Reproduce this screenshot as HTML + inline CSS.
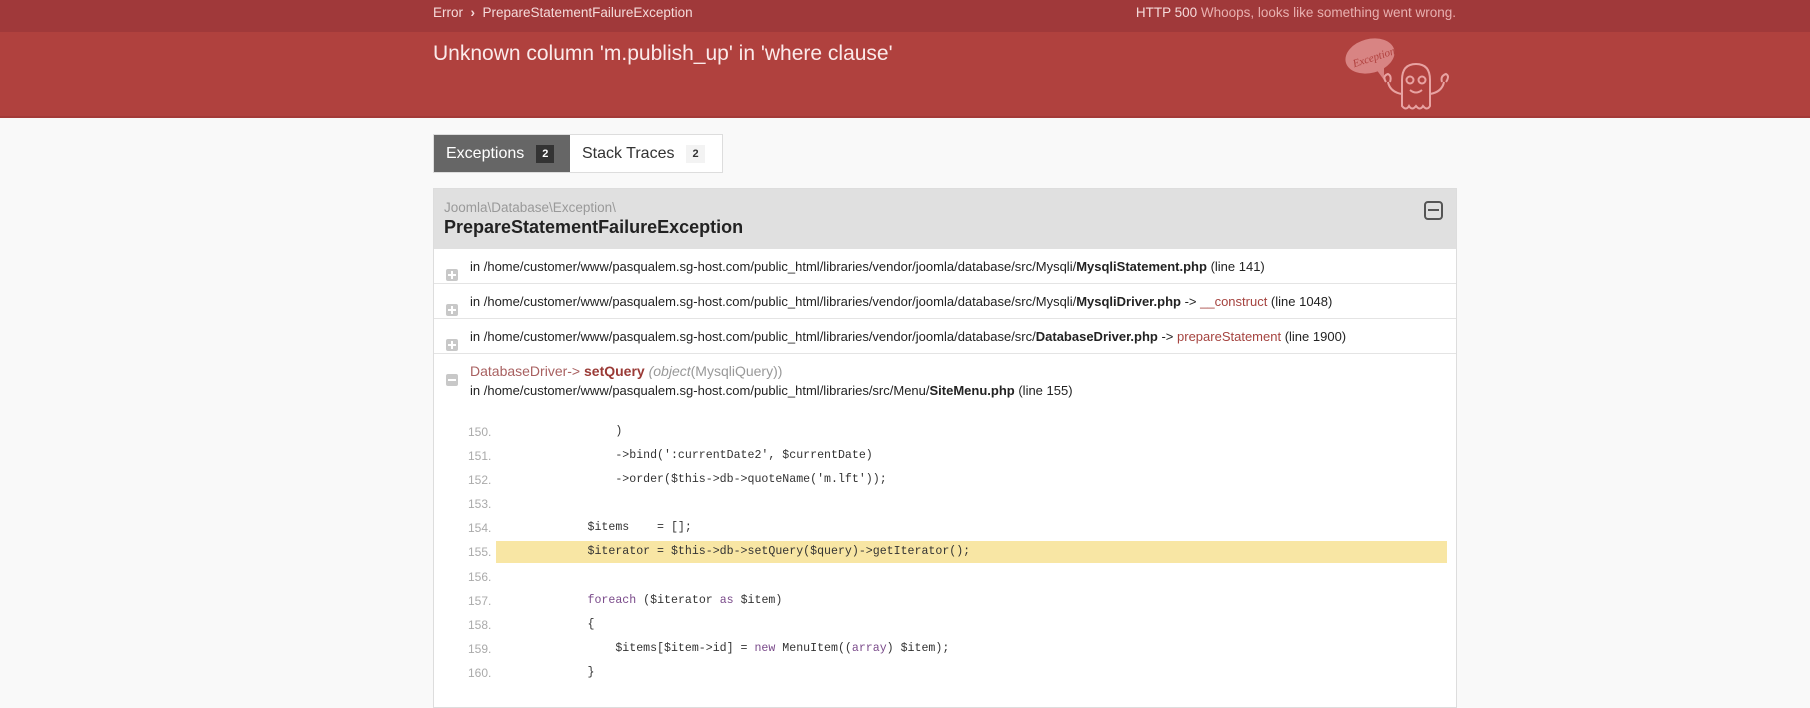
<!DOCTYPE html>
<html><head><meta charset="utf-8"><style>
*{margin:0;padding:0;box-sizing:border-box}
body{width:1810px;height:702px;overflow:hidden;background:#f9f9f9;font-family:"Liberation Sans",Arial,sans-serif;color:#333}
.top{height:32px;background:#a0393a;color:#f0c8c8;font-size:13.5px;position:relative}
.top .l{position:absolute;left:433px;top:5px;color:#f5dada}
.top .r{position:absolute;right:354px;top:5px;color:#e8b0b0}
.top .r b{font-weight:normal;color:#f5dada}
.hdr{height:86px;background:#b0413e;position:relative;border-bottom:2px solid #a33a38}
.hdr h1{position:absolute;left:433px;top:10px;font-weight:normal;font-size:21px;color:#fbeaea}
.ghost{position:absolute;left:1340px;top:4px}
.tabs{position:absolute;left:433px;top:134px;height:39px;display:flex;border:1px solid #ddd;background:#fff}
.tab{font-size:16px;padding:0 12px;display:flex;align-items:center}
.tab.a{background:#666;color:#fff;width:136px}
.tab span{font-size:11px;font-weight:bold;padding:3px 6px;margin-left:12px}
.tab.a span{background:#333;color:#fff}
.tab.b{width:152px}
.tab.b span{background:#f3f3f3;color:#333}
.panel{position:absolute;left:433px;top:188px;width:1024px;height:520px;background:#fff;border:1px solid #ddd}
.ph{height:60px;background:#e0e0e0;position:relative}
.ph .ns{position:absolute;left:10px;top:11px;color:#999;font-size:13.5px}
.ph .cl{position:absolute;left:10px;top:28px;color:#222;font-size:18px;font-weight:bold}
.ph .mn{position:absolute;right:13px;top:12px;width:19px;height:19px;border:2px solid #555;border-radius:4px}
.ph .mn:after{content:"";position:absolute;left:2px;right:2px;top:6px;height:2px;background:#555}
.row{height:35px;border-bottom:1px solid #e4e4e4;position:relative;font-size:13px;color:#222}
.row .t{position:absolute;left:36px;top:10px;white-space:nowrap}
.ic{position:absolute;left:12px;top:20px;width:12px;height:12px;background:#c8c8c8;border-radius:2px}
.ic:before{content:"";position:absolute;left:2px;right:2px;top:5px;height:2px;background:#fff}
.ic.p:after{content:"";position:absolute;top:2px;bottom:2px;left:5px;width:2px;background:#fff}
.fn{color:#a5433f}
.tr{position:relative;height:300px}
.tr .h1{position:absolute;left:36px;top:9px;font-size:14px;color:#a86060}
.tr .h1 b{color:#9a3a36}
.tr .h2{position:absolute;left:36px;top:29px;font-size:13px;color:#222}
.tr .ic{top:20px}
.code{position:absolute;left:0;top:67px;width:100%;font-family:"Liberation Mono","DejaVu Sans Mono",monospace;font-size:11.6px}
.ln{height:24.1px;position:relative;white-space:pre;color:#333}
.ln .n{position:absolute;left:34px;top:4px;color:#aaa;font-family:"Liberation Sans",sans-serif;font-size:12px}
.ln .c{position:absolute;left:62px;top:0;right:9px;height:22px;line-height:22px;padding-left:8px}
.hl .c{background:#f8e6a4}
.k{color:#7a4a8a}
</style></head><body>
<div class="top"><div class="l">Error &nbsp;<b style="font-weight:bold">›</b>&nbsp; PrepareStatementFailureException</div><div class="r"><b>HTTP 500</b> Whoops, looks like something went wrong.</div></div>
<div class="hdr"><h1>Unknown column 'm.publish_up' in 'where clause'</h1>
<svg class="ghost" width="120" height="80" viewBox="0 0 120 80" fill="none" stroke="#e8a3a2" stroke-width="2">
<ellipse cx="30" cy="20" rx="25" ry="17" fill="#d88483" stroke="none" transform="rotate(-15 30 20)"/>
<path d="M36 33 L44 44 L44 31Z" fill="#d88483" stroke="none"/>
<text x="12" y="26" font-family="Liberation Serif,serif" font-style="italic" font-size="11" fill="#b0413e" stroke="none" transform="rotate(-18 30 22)">Exception!</text>
<path d="M62 70 L62 44 Q62 28 76 28 Q90 28 90 44 L90 70 Q87 75 83 70 Q80 75 76 70 Q72 75 69 70 Q66 75 62 70Z"/>
<circle cx="70" cy="44" r="3.5"/><circle cx="82" cy="44" r="3.5"/>
<path d="M70 54 Q76 59 82 54"/>
<path d="M62 58 Q50 56 48 46 M46 46 Q42 40 48 38 Q52 40 50 46"/>
<path d="M90 58 Q102 56 104 46 M102 46 Q100 40 106 38 Q110 40 106 46"/>
</svg></div>
<div class="tabs"><div class="tab a">Exceptions<span>2</span></div><div class="tab b">Stack Traces<span>2</span></div></div>
<div class="panel">
<div class="ph"><div class="ns">Joomla\Database\Exception\</div><div class="cl">PrepareStatementFailureException</div><div class="mn"></div></div>
<div class="row"><div class="ic p"></div><div class="t">in /home/customer/www/pasqualem.sg-host.com/public_html/libraries/vendor/joomla/database/src/Mysqli/<b>MysqliStatement.php</b> (line 141)</div></div>
<div class="row"><div class="ic p"></div><div class="t">in /home/customer/www/pasqualem.sg-host.com/public_html/libraries/vendor/joomla/database/src/Mysqli/<b>MysqliDriver.php</b> -&gt; <span class="fn">__construct</span> (line 1048)</div></div>
<div class="row"><div class="ic p"></div><div class="t">in /home/customer/www/pasqualem.sg-host.com/public_html/libraries/vendor/joomla/database/src/<b>DatabaseDriver.php</b> -&gt; <span class="fn">prepareStatement</span> (line 1900)</div></div>
<div class="tr"><div class="ic"></div>
<div class="h1">DatabaseDriver-&gt; <b>setQuery</b> <span style="color:#999"><i>(object</i>(MysqliQuery))</span></div>
<div class="h2">in /home/customer/www/pasqualem.sg-host.com/public_html/libraries/src/Menu/<b>SiteMenu.php</b> (line 155)</div>
<div class="code">
<div class="ln"><span class="n">150.</span><span class="c">                )</span></div>
<div class="ln"><span class="n">151.</span><span class="c">                -&gt;bind(':currentDate2', $currentDate)</span></div>
<div class="ln"><span class="n">152.</span><span class="c">                -&gt;order($this-&gt;db-&gt;quoteName('m.lft'));</span></div>
<div class="ln"><span class="n">153.</span><span class="c"></span></div>
<div class="ln"><span class="n">154.</span><span class="c">            $items    = [];</span></div>
<div class="ln hl"><span class="n">155.</span><span class="c">            $iterator = $this-&gt;db-&gt;setQuery($query)-&gt;getIterator();</span></div>
<div class="ln"><span class="n">156.</span><span class="c"></span></div>
<div class="ln"><span class="n">157.</span><span class="c">            <span class="k">foreach</span> ($iterator <span class="k">as</span> $item)</span></div>
<div class="ln"><span class="n">158.</span><span class="c">            {</span></div>
<div class="ln"><span class="n">159.</span><span class="c">                $items[$item-&gt;id] = <span class="k">new</span> MenuItem((<span class="k">array</span>) $item);</span></div>
<div class="ln"><span class="n">160.</span><span class="c">            }</span></div>
</div></div>
</div>
</body></html>
